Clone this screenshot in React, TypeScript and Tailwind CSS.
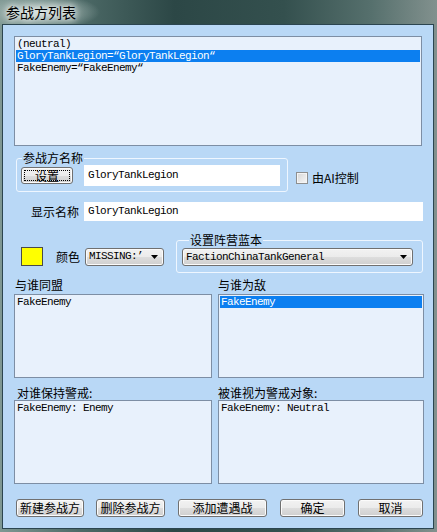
import React from 'react';

const cjk = "font-['Noto_Sans_CJK_SC',sans-serif]";
const mono = "font-['Liberation_Mono',monospace] text-[11px] tracking-[-0.6px]";
const btnFace =
  'rounded-[3px] border border-[#707070] bg-[linear-gradient(#f2f2f2_0%,#ebebeb_50%,#dddddd_51%,#cfcfcf_100%)] shadow-[inset_0_0_0_1px_#fbfbfb]';

interface ListProps {
  items: string[];
  selected?: number;
  className: string;
}

const ListBox: React.FC<ListProps> = ({ items, selected, className }) => (
  <div className={`border border-[#7d8ea4] bg-[#e8f1fc] p-[1px] ${className}`}>
    {items.map((item, i) => (
      <div
        key={i}
        className={`h-[12px] whitespace-pre pl-[1px] leading-[12px] ${mono} ${
          i === selected ? 'bg-[#0c7ff0] text-white' : 'text-black'
        }`}
      >
        {item}
      </div>
    ))}
  </div>
);

const Button: React.FC<{ label: string; className: string }> = ({ label, className }) => (
  <button
    className={`${btnFace} flex h-[18px] items-center justify-center text-[12px] leading-none text-black ${cjk} ${className}`}
  >
    {label}
  </button>
);

const Combo: React.FC<{ value: string; className: string }> = ({ value, className }) => (
  <div className={`${btnFace} flex items-center pl-[3px] pr-[5px] ${className}`}>
    <span className={`flex-1 overflow-hidden whitespace-pre text-black ${mono}`}>{value}</span>
    <svg width="7" height="4" viewBox="0 0 7 4">
      <path d="M0 0h7L3.5 4z" fill="#000" />
    </svg>
  </div>
);

export default function App() {
  return (
    <div className="flex h-[532px] w-[437px] flex-col overflow-hidden bg-[radial-gradient(ellipse_60px_18px_at_40px_12px,#c4d2ce_0%,rgba(160,180,176,0.6)_60%,transparent_100%),linear-gradient(90deg,#7f9893_0%,#4d6a67_18%,#2c4746_40%,#34504e_65%,#56706d_85%,#82918e_100%)]">
      {/* title bar */}
      <div className="flex h-[24px] shrink-0 items-center pl-[6px]">
        <span className={`text-[14px] leading-none text-black ${cjk} [text-shadow:0_0_6px_#ffffff,0_0_10px_#ffffff]`}>
          参战方列表
        </span>
      </div>

      {/* client area */}
      <div className="ml-[2px] h-[505px] w-[432px] border border-[#2b4550] bg-[#b9d8f6] pl-[11px]">
        <ListBox
          className="mt-[11px] h-[110px] w-[408px]"
          items={['(neutral)', 'GloryTankLegion=“GloryTankLegion“', 'FakeEnemy=“FakeEnemy“']}
          selected={1}
        />

        {/* name group */}
        <div className="mt-[5px] flex items-start">
          <fieldset className="ml-[2px] w-[272px] rounded-[3px] border border-[#eef6ff] pb-[5px]">
            <legend className={`ml-[5px] px-[1px] text-[12px] leading-[14px] text-black ${cjk}`}>参战方名称</legend>
            <div className="flex items-center pl-[4px]">
              <button className={`${btnFace} flex h-[17px] w-[52px] items-center justify-center border-[#3c7fb1] p-[2px]`}>
                <span
                  className={`flex h-full w-full items-center justify-center border border-dotted border-black text-[12px] leading-none text-black ${cjk}`}
                >
                  设置
                </span>
              </button>
              <div className={`ml-[11px] flex h-[21px] w-[196px] items-center bg-white pl-[4px] text-black ${mono}`}>
                GloryTankLegion
              </div>
            </div>
          </fieldset>
          <div className="ml-[8px] mt-[21px] flex items-center">
            <div className="h-[12px] w-[12px] border border-[#8e8f8f] bg-[linear-gradient(135deg,#d6d6d6,#f7f7f7)] shadow-[inset_0_0_0_1px_#f4f4f4]" />
            <span className={`ml-[4px] text-[12px] leading-none text-black ${cjk}`}>由AI控制</span>
          </div>
        </div>

        {/* display name */}
        <div className="mt-[10px] flex items-center">
          <span className={`w-[65px] text-right text-[12px] leading-none text-black ${cjk}`}>显示名称</span>
          <div className={`ml-[5px] flex h-[19px] w-[339px] items-center bg-white pl-[4px] text-black ${mono}`}>
            GloryTankLegion
          </div>
        </div>

        {/* colour + template */}
        <div className="mt-[13px] flex items-start">
          <div className="mt-[13px] flex h-[19px] items-center">
            <div className="ml-[7px] h-[19px] w-[22px] border border-[#4a4a4a] bg-[#ffff00]" />
            <span className={`ml-[13px] text-[12px] leading-none text-black ${cjk}`}>颜色</span>
            <Combo className="ml-[5px] h-[18px] w-[79px]" value="MISSING:’" />
          </div>
          <fieldset className="ml-[12px] w-[247px] rounded-[3px] border border-[#eef6ff] pb-[6px] pt-[2px]">
            <legend className={`ml-[12px] px-[1px] text-[12px] leading-[12px] text-black ${cjk}`}>设置阵营蓝本</legend>
            <Combo className="ml-[5px] h-[18px] w-[231px]" value="FactionChinaTankGeneral" />
          </fieldset>
        </div>

        {/* allies / enemies */}
        <div className="mt-[5px] flex">
          <div className="w-[198px]">
            <div className={`pl-[1px] text-[12px] leading-[14px] text-black ${cjk}`}>与谁同盟</div>
            <ListBox className="mt-[2px] h-[84px] w-[198px]" items={['FakeEnemy']} />
          </div>
          <div className="ml-[6px] w-[206px]">
            <div className={`text-[12px] leading-[14px] text-black ${cjk}`}>与谁为敌</div>
            <ListBox className="mt-[2px] h-[84px] w-[206px]" items={['FakeEnemy']} selected={0} />
          </div>
        </div>

        {/* alert lists */}
        <div className="mt-[8px] flex">
          <div className="w-[198px]">
            <div className={`pl-[3px] text-[12px] leading-[14px] text-black ${cjk}`}>对谁保持警戒:</div>
            <ListBox className="h-[84px] w-[198px]" items={['FakeEnemy: Enemy']} />
          </div>
          <div className="ml-[6px] w-[206px]">
            <div className={`text-[12px] leading-[14px] text-black ${cjk}`}>被谁视为警戒对象:</div>
            <ListBox className="h-[84px] w-[206px]" items={['FakeEnemy: Neutral']} />
          </div>
        </div>

        {/* buttons */}
        <div className="mt-[15px] flex">
          <Button className="ml-[2px] w-[68px]" label="新建参战方" />
          <Button className="ml-[12px] w-[69px]" label="删除参战方" />
          <Button className="ml-[13px] w-[89px]" label="添加遭遇战" />
          <Button className="ml-[13px] w-[65px]" label="确定" />
          <Button className="ml-[13px] w-[65px]" label="取消" />
        </div>
      </div>
    </div>
  );
}
